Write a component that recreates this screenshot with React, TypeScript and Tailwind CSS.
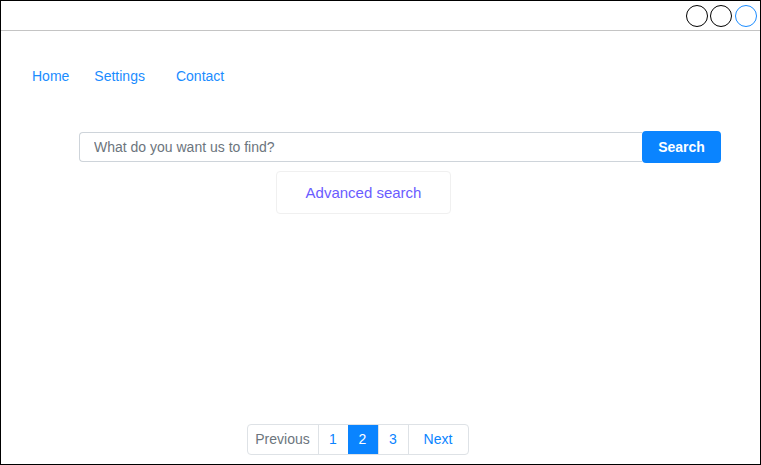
export default function App() {
  return (
    <div className="flex h-[465px] w-[761px] flex-col border border-black bg-white font-['Liberation_Sans',Arial,sans-serif]">
      <header className="flex h-[30px] shrink-0 items-center justify-end gap-[2px] border-b border-[#c4c4c4] pr-[3px]">
        <span className="h-[22px] w-[22px] rounded-full border border-black" />
        <span className="h-[22px] w-[22px] rounded-full border border-black" />
        <span className="ml-[1px] h-[22px] w-[22px] rounded-full border border-[#1a8cff]" />
      </header>

      <nav className="mt-[36px] flex text-[14px] leading-[18px] text-[#1a8cff]">
        <a className="ml-[31px]">Home</a>
        <a className="ml-[25px]">Settings</a>
        <a className="ml-[31px]">Contact</a>
      </nav>

      <div className="mt-[46px] flex items-center pl-[78px] pr-[39px]">
        <input
          className="h-[30px] flex-1 rounded-l-[4px] border border-r-0 border-[#ced4da] px-[14px] text-[14px] text-[#495057] outline-none placeholder:text-[#6c757d]"
          placeholder="What do you want us to find?"
        />
        <button className="h-[32px] w-[79px] rounded-[4px] bg-[#0a84ff] text-[14px] font-bold text-white">Search</button>
      </div>

      <div className="mt-[8px] flex justify-center pr-[34px]">
        <button className="h-[43px] w-[175px] rounded-[4px] border border-[#f0f0f0] pt-[1px] text-[15px] text-[#6a5cff]">Advanced search</button>
      </div>

      <div className="mt-auto mb-[9px] flex justify-center pr-[46px]">
        <div className="flex h-[31px] overflow-hidden rounded-[4px] border border-[#dee2e6] text-[14px]">
          <span className="flex w-[70px] items-center justify-center text-[#6c757d]">Previous</span>
          <span className="flex w-[30px] items-center justify-center border-l border-[#dee2e6] text-[#0a84ff]">1</span>
          <span className="flex w-[30px] items-center justify-center bg-[#0a84ff] text-white">2</span>
          <span className="flex w-[30px] items-center justify-center border-l border-[#dee2e6] text-[#0a84ff]">3</span>
          <span className="flex w-[60px] items-center justify-center border-l border-[#dee2e6] text-[#0a84ff]">Next</span>
        </div>
      </div>
    </div>
  );
}
